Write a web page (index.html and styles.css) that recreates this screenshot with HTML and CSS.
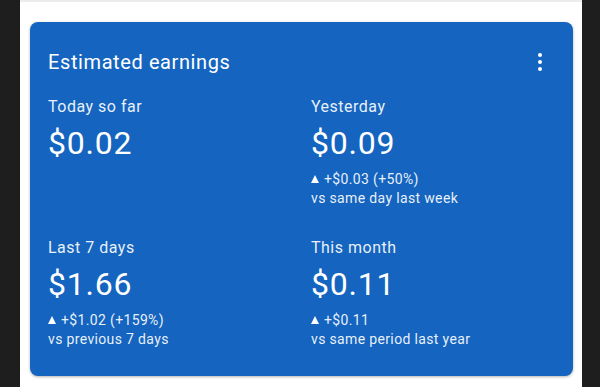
FILE: index.html
```html
<!DOCTYPE html>
<html lang="en">
<head>
    <meta charset="UTF-8">
    <title>Estimated earnings</title>
    <link rel="stylesheet" href="styles.css">
</head>
<body>
    <div class="page">
        <div class="earnings-card">
            <div class="card-head">
                <h2 class="card-title">Estimated earnings</h2>
                <div class="menu-btn">
                    <span class="dot"></span>
                    <span class="dot"></span>
                    <span class="dot"></span>
                </div>
            </div>

            <div class="stats">
                <div class="stat">
                    <div class="stat-label">Today so far</div>
                    <div class="stat-value">$0.02</div>
                </div>

                <div class="stat">
                    <div class="stat-label">Yesterday</div>
                    <div class="stat-value">$0.09</div>
                    <div class="stat-change">
                        <svg class="arrow" width="8" height="8" viewBox="0 0 8 8"><polygon points="4,0 8,8 0,8" fill="#fff"/></svg>
                        +$0.03 (+50%)
                    </div>
                    <div class="stat-compare">vs same day last week</div>
                </div>

                <div class="stat">
                    <div class="stat-label">Last 7 days</div>
                    <div class="stat-value">$1.66</div>
                    <div class="stat-change">
                        <svg class="arrow" width="8" height="8" viewBox="0 0 8 8"><polygon points="4,0 8,8 0,8" fill="#fff"/></svg>
                        +$1.02 (+159%)
                    </div>
                    <div class="stat-compare">vs previous 7 days</div>
                </div>

                <div class="stat">
                    <div class="stat-label">This month</div>
                    <div class="stat-value">$0.11</div>
                    <div class="stat-change">
                        <svg class="arrow" width="8" height="8" viewBox="0 0 8 8"><polygon points="4,0 8,8 0,8" fill="#fff"/></svg>
                        +$0.11
                    </div>
                    <div class="stat-compare">vs same period last year</div>
                </div>
            </div>
        </div>
    </div>
</body>
</html>
```

FILE: styles.css
```css
html, body {
    margin: 0;
    height: 100%;
}

body {
    background: #1e1e1e;
    padding: 0 18px 0 20px;
    font-family: Roboto, "Liberation Sans", sans-serif;
    color: #fff;
}

.page {
    background: #fff;
    height: 100%;
    border-top: 2px solid #ececec;
    box-sizing: border-box;
    padding: 20px 9px 0 10px;
}

.earnings-card {
    background: #1565c0;
    border-radius: 8px;
    height: 354px;
    box-sizing: border-box;
    padding: 28px 18px 0;
    box-shadow: 0 1px 3px rgba(0,0,0,0.3);
}

.card-head {
    display: flex;
    justify-content: space-between;
    align-items: center;
}

.card-title {
    margin: 0;
    font-size: 20px;
    line-height: 24px;
    font-weight: 400;
    letter-spacing: 0.6px;
}

.menu-btn {
    display: flex;
    flex-direction: column;
    gap: 3px;
    margin-right: 13px;
}

.dot {
    width: 4px;
    height: 4px;
    border-radius: 50%;
    background: #fff;
}

.stats {
    display: grid;
    grid-template-columns: 244px 1fr;
    column-gap: 19px;
    row-gap: 31px;
    margin-top: 23px;
}

.stat-label {
    font-size: 16px;
    line-height: 20px;
    letter-spacing: 0.5px;
    color: rgba(255,255,255,0.92);
}

.stat-value {
    font-size: 32px;
    line-height: 40px;
    letter-spacing: 0.8px;
    margin-top: 6px;
}

.stat-change {
    display: flex;
    align-items: center;
    gap: 5px;
    margin-top: 8px;
    font-size: 14px;
    line-height: 17px;
    letter-spacing: 0.35px;
    color: rgba(255,255,255,0.92);
}

.arrow {
    margin-bottom: 2px;
}

.stat-compare {
    margin-top: 2px;
    font-size: 14px;
    line-height: 17px;
    letter-spacing: 0.35px;
    color: rgba(255,255,255,0.92);
}
```
